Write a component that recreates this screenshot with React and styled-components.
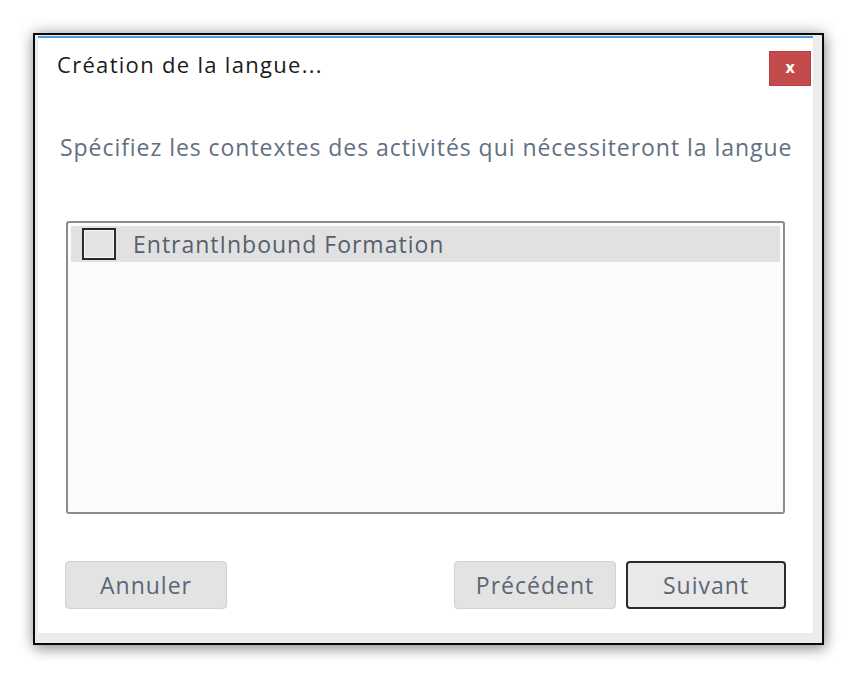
import React from 'react'
import styled, { createGlobalStyle } from 'styled-components'

const Global = createGlobalStyle`
  html, body {
    margin: 0;
    padding: 0;
    background: #ffffff;
  }
  body {
    font-family: "Open Sans", "Noto Sans", "DejaVu Sans", sans-serif;
  }
`

const App = () => {
  return (
    <Page>
      <Global />
      <Frame>
        <Panel>
          <Header>
            <Title>Création de la langue...</Title>
            <CloseButton aria-label="Fermer">x</CloseButton>
          </Header>
          <Prompt>Spécifiez les contextes des activités qui nécessiteront la langue</Prompt>
          <ListBox>
            <Row selected>
              <Check />
              <RowLabel>EntrantInbound Formation</RowLabel>
            </Row>
          </ListBox>
          <Footer>
            <Button>Annuler</Button>
            <RightGroup>
              <Button>Précédent</Button>
              <Button primary>Suivant</Button>
            </RightGroup>
          </Footer>
        </Panel>
      </Frame>
    </Page>
  )
}

export default App

const Page = styled.div`
  width: 856px;
  height: 678px;
  padding: 33px 0 0 33px;
  box-sizing: border-box;
`

const Frame = styled.div`
  width: 791px;
  height: 612px;
  box-sizing: border-box;
  border: 2px solid #0a0a0a;
  background: #ececec;
  padding: 1px 9px 10px 3px;
  box-shadow: 0 0 14px rgba(0, 0, 0, 0.35), 2px 6px 12px rgba(0, 0, 0, 0.2);
`

const Panel = styled.div`
  height: 100%;
  box-sizing: border-box;
  background: #ffffff;
  border-top: 2px solid #4d9be0;
  display: flex;
  flex-direction: column;
`

const Header = styled.div`
  display: flex;
  justify-content: space-between;
  align-items: flex-start;
  padding: 11px 2px 0 19px;
  height: 48px;
`

const Title = styled.div`
  font-size: 22px;
  line-height: 30px;
  color: #1a1a1a;
  letter-spacing: 1.3px;
`

const CloseButton = styled.button`
  margin-top: 2px;
  width: 42px;
  height: 35px;
  border: 1px solid #b94040;
  background: #c34b4b;
  color: #ffffff;
  font-family: "Open Sans", sans-serif;
  font-weight: 700;
  font-size: 16px;
  line-height: 1;
  padding: 0 0 3px 0;
  cursor: pointer;
`

const Prompt = styled.div`
  margin: 35px 0 0 22px;
  font-size: 23px;
  line-height: 30px;
  letter-spacing: 0.95px;
  color: #617082;
  white-space: nowrap;
`

const ListBox = styled.div`
  margin: 59px 28px 0 28px;
  height: 293px;
  box-sizing: border-box;
  border: 2px solid #8c8c8c;
  border-radius: 3px;
  background: #fbfbfb;
  padding: 3px;
`

const Row = styled.div`
  height: 36px;
  display: flex;
  align-items: center;
  gap: 17px;
  padding-left: 11px;
  background: ${p => (p.selected ? '#e1e1e1' : 'transparent')};
`

const Check = styled.span`
  width: 34px;
  height: 32px;
  box-sizing: border-box;
  border: 2px solid #2a2a2a;
  box-shadow: inset 0 0 0 1px #f6f6f6;
  background: #e3e3e3;
`

const RowLabel = styled.span`
  font-size: 23px;
  letter-spacing: 1px;
  color: #56606d;
`

const Footer = styled.div`
  display: flex;
  justify-content: space-between;
  margin: 47px 27px 0 27px;
`

const RightGroup = styled.div`
  display: flex;
  gap: 10px;
`

const Button = styled.button`
  width: ${p => (p.primary ? '160px' : '162px')};
  height: 48px;
  box-sizing: border-box;
  border: ${p => (p.primary ? '2px solid #2b2b2b' : '1px solid #d2d2d2')};
  border-radius: 4px;
  background: ${p => (p.primary ? '#e9e9e9' : '#e3e3e3')};
  font-family: "Open Sans", "Noto Sans", sans-serif;
  font-size: 23px;
  letter-spacing: 1px;
  color: #5a6677;
  cursor: pointer;
`
